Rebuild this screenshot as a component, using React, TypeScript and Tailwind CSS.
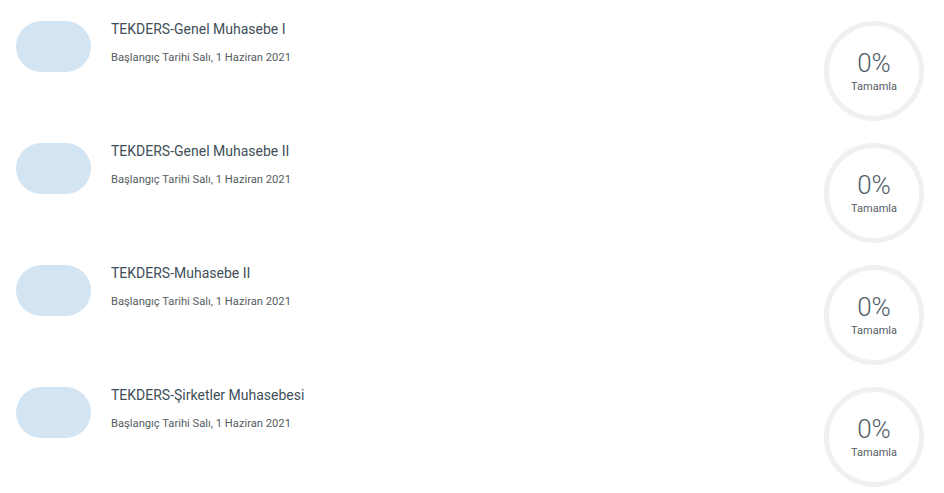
const courses = [
  'TEKDERS-Genel Muhasebe I',
  'TEKDERS-Genel Muhasebe II',
  'TEKDERS-Muhasebe II',
  'TEKDERS-Şirketler Muhasebesi',
];

export default function App() {
  return (
    <div className="min-h-screen bg-white font-['Roboto',sans-serif]">
      {courses.map((title) => (
        <CourseRow key={title} title={title} />
      ))}
    </div>
  );
}

function CourseRow({ title }: { title: string }) {
  return (
    <div className="flex h-[122px] items-start pl-4 pr-5 pt-[21px]">
      <div className="h-[51px] w-[75px] shrink-0 rounded-full bg-[#d3e4f2]" />
      <div className="ml-5 flex-1">
        <div className="-mt-px text-[14px] leading-[18px] text-[#414f58]">{title}</div>
        <div className="mt-[12px] text-[11.2px] leading-[16px] text-[#555d63]">Başlangıç Tarihi Salı, 1 Haziran 2021</div>
      </div>
      <div className="flex h-[100px] w-[100px] shrink-0 flex-col items-center justify-center rounded-full border-[5px] border-[#f0f0f0]">
        <span className="text-[26px] font-light leading-[28px] text-[#4f5d66]">0%</span>
        <span className="mt-[3px] text-[11px] leading-[14px] text-[#555d63]">Tamamla</span>
      </div>
    </div>
  );
}
